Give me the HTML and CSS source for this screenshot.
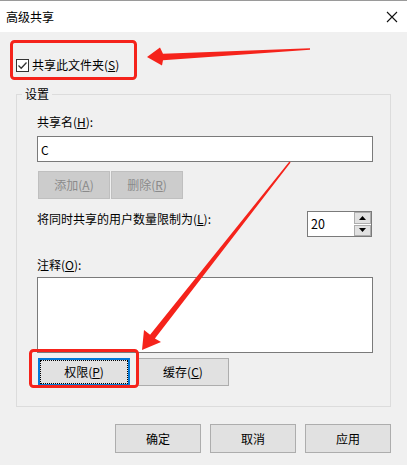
FILE: index.html
```html
<!DOCTYPE html>
<html lang="zh">
<head>
<meta charset="utf-8">
<title>高级共享</title>
<link rel="stylesheet" href="styles.css">
</head>
<body>
<div class="window">
  <div class="titlebar">
    <span class="title">高级共享</span>
    <svg class="close" width="12" height="12" viewBox="0 0 12 12"><path d="M1 1L11 11M11 1L1 11" stroke="#111" stroke-width="1.1" fill="none"/></svg>
  </div>
  <div class="content">
    <div class="check-row">
      <svg class="checkbox" width="13" height="13" viewBox="0 0 13 13"><rect x="0.5" y="0.5" width="12" height="12" fill="#fff" stroke="#333"/><path d="M2.5 6.5L5.2 9.2L10.5 3.5" stroke="#333" stroke-width="1.3" fill="none"/></svg>
      <span>共享此文件夹(<u>S</u>)</span>
    </div>
    <div class="group">
      <span class="group-title">设置</span>
      <div class="label lbl-name">共享名(<u>H</u>):</div>
      <input class="field" type="text" value="C">
      <div class="btn-row">
        <button class="btn disabled">添加(<u>A</u>)</button>
        <button class="btn disabled">删除(<u>R</u>)</button>
      </div>
      <div class="limit-row">
        <span class="label">将同时共享的用户数量限制为(<u>L</u>):</span>
        <div class="spinner">
          <span class="spin-value">20</span>
          <div class="spin-btns">
            <span class="spin-btn"><svg width="7" height="4" viewBox="0 0 7 4"><path d="M0 4L3.5 0L7 4Z" fill="#000"/></svg></span>
            <span class="spin-btn"><svg width="7" height="4" viewBox="0 0 7 4"><path d="M0 0L3.5 4L7 0Z" fill="#000"/></svg></span>
          </div>
        </div>
      </div>
      <div class="label lbl-note">注释(<u>O</u>):</div>
      <textarea class="note"></textarea>
      <div class="btn-row perm-row">
        <button class="btn wide focused">权限(<u>P</u>)</button>
        <button class="btn wide">缓存(<u>C</u>)</button>
      </div>
    </div>
    <div class="footer">
      <button class="btn foot">确定</button>
      <button class="btn foot">取消</button>
      <button class="btn foot">应用</button>
    </div>
  </div>
  <svg class="annot" width="407" height="465" viewBox="0 0 407 465">
    <rect x="11.5" y="41.5" width="124" height="37" rx="3" fill="none" stroke="#f5231b" stroke-width="3"/>
    <rect x="30.5" y="350.5" width="107" height="36" rx="3" fill="none" stroke="#f5231b" stroke-width="3"/>
    <polygon points="147,57 160,47.5 163,53.8 310,48.3 310,49.8 163,60.2 162,65.5" fill="#f5231b"/>
    <polygon points="142,350 144,330 150.1,334.7 289.4,161.6 290.6,162.4 154.9,338.5 161,342" fill="#f5231b"/>
  </svg>
</div>
</body>
</html>
```
FILE: styles.css
```css
html, body {
  margin: 0;
  padding: 0;
}
body {
  width: 407px;
  height: 465px;
  overflow: hidden;
  font-family: "Noto Sans CJK SC", "Noto Sans", sans-serif;
  font-size: 12px;
  color: #000;
  background: #f0f0f0;
}
.window {
  position: relative;
  width: 407px;
  height: 465px;
}
.titlebar {
  height: 32px;
  box-sizing: border-box;
  background: #fff;
  border-top: 1px solid #9a9a9a;
  display: flex;
  align-items: center;
  justify-content: space-between;
  padding: 0 9px 0 6px;
}
.title {
  line-height: 16px;
}
.content {
  padding-top: 25px;
}
.check-row {
  display: flex;
  align-items: center;
  gap: 3px;
  height: 16px;
  margin-left: 16px;
  line-height: 16px;
}
.checkbox {
  display: block;
}
u {
  text-decoration: underline;
  text-underline-offset: 1px;
}
.group {
  margin: 21px 0 0 16px;
  width: 375px;
  box-sizing: border-box;
  border: 1px solid #dcdcdc;
  padding: 0 17px 20px 20px;
  display: flex;
  flex-direction: column;
  align-items: flex-start;
}
.group-title {
  margin: -9px 0 0 -15px;
  padding: 0 3px;
  background: #f0f0f0;
  line-height: 16px;
}
.label {
  line-height: 16px;
}
.lbl-name {
  margin-top: 12px;
}
.field {
  margin: 6px 0 0 0;
  width: 336px;
  height: 26px;
  box-sizing: border-box;
  border: 1px solid #7a7a7a;
  padding: 0 3px;
  font: inherit;
  background: #fff;
  outline: none;
}
.btn-row {
  display: flex;
  gap: 1px;
  margin: 9px 0 0 1px;
}
.btn {
  font: inherit;
  color: #000;
  background: #e1e1e1;
  border: 1px solid #adadad;
  box-sizing: border-box;
  width: 72px;
  height: 28px;
  padding: 0;
  line-height: 16px;
}
.btn.disabled {
  background: #cccccc;
  border-color: #bfbfbf;
  color: #8a8a8a;
}
.limit-row {
  display: flex;
  align-items: flex-start;
  justify-content: space-between;
  width: 335px;
  margin-top: 12px;
}
.spinner {
  display: flex;
  width: 65px;
  height: 26px;
  box-sizing: border-box;
  border: 1px solid #7a7a7a;
  background: #fff;
}
.spin-value {
  flex: 1;
  padding-left: 3px;
  line-height: 24px;
  font-size: 12.5px;
}
.spin-btns {
  width: 17px;
  display: flex;
  flex-direction: column;
  gap: 1px;
  background: #fff;
}
.spin-btn {
  flex: 1;
  background: #e1e1e1;
  border: 1px solid #adadad;
  display: flex;
  align-items: center;
  justify-content: center;
}
.lbl-note {
  margin-top: 20px;
}
.note {
  margin: 4px 0 0 0;
  width: 336px;
  height: 76px;
  box-sizing: border-box;
  border: 1px solid #7a7a7a;
  background: #fff;
  resize: none;
  font: inherit;
  outline: none;
}
.perm-row {
  gap: 7px;
  margin-top: 5px;
}
.btn.wide {
  width: 92px;
  height: 28px;
}
.btn.focused {
  border: 2px solid #0078d7;
  outline: 1px dotted #000;
  outline-offset: -3px;
}
.footer {
  display: flex;
  justify-content: flex-end;
  gap: 9px;
  padding-right: 16px;
  margin-top: 17px;
}
.btn.foot {
  width: 86px;
  height: 29px;
}
.annot {
  position: absolute;
  left: 0;
  top: 0;
  pointer-events: none;
}
```
